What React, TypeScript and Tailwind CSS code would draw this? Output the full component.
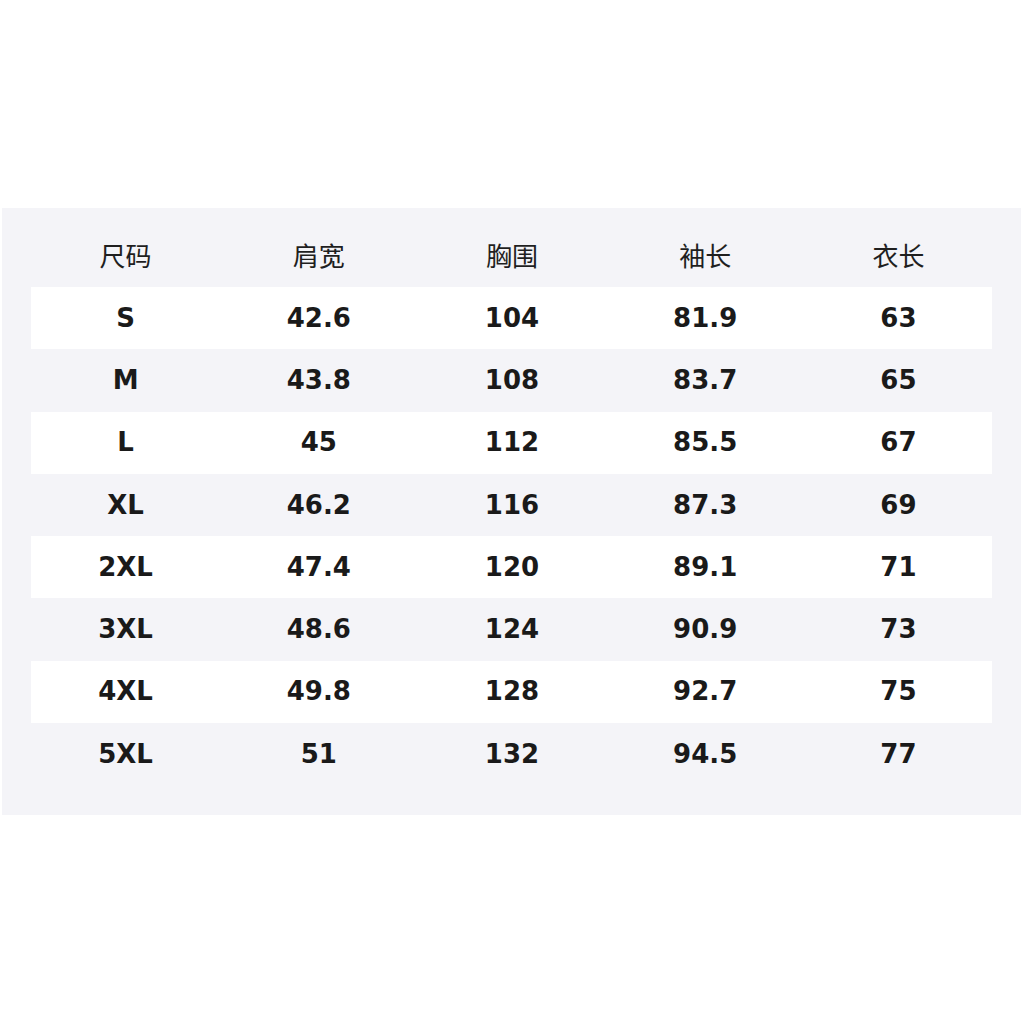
const headers = ['尺码', '肩宽', '胸围', '袖长', '衣长']

const rows = [
  ['S', '42.6', '104', '81.9', '63'],
  ['M', '43.8', '108', '83.7', '65'],
  ['L', '45', '112', '85.5', '67'],
  ['XL', '46.2', '116', '87.3', '69'],
  ['2XL', '47.4', '120', '89.1', '71'],
  ['3XL', '48.6', '124', '90.9', '73'],
  ['4XL', '49.8', '128', '92.7', '75'],
  ['5XL', '51', '132', '94.5', '77'],
]

export default function App() {
  return (
    <div className="w-[1024px] h-[1024px] bg-white pt-[208px] pl-[2px]">
      <div className="w-[1019px] bg-[#f4f4f8] px-[29px] pb-[30px]">
        {/* Header */}
        <div className="h-[79px] pt-[27px]">
          <div className="-ml-[2px] w-[966px] grid grid-cols-5 text-[26px] leading-[40px] text-[#1f1f1f] font-['Noto_Sans_CJK_SC',sans-serif]">
            {headers.map((h) => (
              <div key={h} className="text-center">{h}</div>
            ))}
          </div>
        </div>

        {/* Rows */}
        {rows.map((r, i) => (
          <div key={r[0]} className={`h-[62.3px] flex items-center ${i % 2 === 0 ? 'bg-white' : ''}`}>
            <div className="-ml-[2px] w-[966px] shrink-0 grid grid-cols-5 text-[26px] font-bold text-[#1a1a1a] font-['DejaVu_Sans',sans-serif]">
              {r.map((c, j) => (
                <div key={j} className="text-center">{c}</div>
              ))}
            </div>
          </div>
        ))}
      </div>
    </div>
  )
}
